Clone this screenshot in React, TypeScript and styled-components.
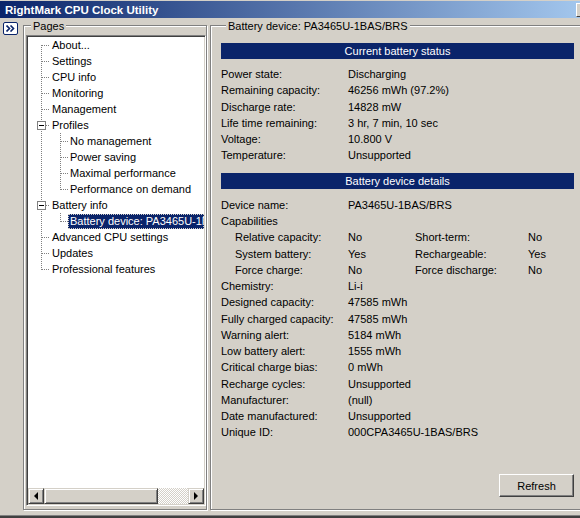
import React from "react";
import styled, {createGlobalStyle, css} from "styled-components";

const GlobalStyle = createGlobalStyle`
    html, body {
        margin: 0;
        padding: 0;
        background: #d4d0c8;
    }
    body {
        font-family: "Liberation Sans", Arial, sans-serif;
        font-size: 11px;
        color: #000;
    }
`;

const Viewport = styled.div`
    width: 580px;
    height: 518px;
    overflow: hidden;
`;

const StyledWindow = styled.div`
    width: 594px;
    height: 518px;
    box-sizing: border-box;
    border-top: 1px solid #d4d0c8;
    background: #d4d0c8;
    display: flex;
    flex-direction: column;
`;

const TitleBar = styled.div`
    height: 17px;
    flex: none;
    display: flex;
    align-items: center;
    justify-content: space-between;
    padding-left: 5px;
    padding-right: 2px;
    background: linear-gradient(to right, #0a246a, #a6caf0);
`;

const Title = styled.span`
    color: #fff;
    font-weight: bold;
    font-size: 11.5px;
    white-space: nowrap;
`;

const CloseButton = styled.span`
    width: 16px;
    height: 14px;
    box-sizing: border-box;
    background: #d4d0c8;
    border: 1px solid;
    border-color: #fff #404040 #404040 #fff;
    display: flex;
    align-items: center;
    justify-content: center;
`;

const Body = styled.div`
    flex: 1;
    display: flex;
    align-items: flex-start;
    padding-bottom: 5px;
`;

const ToggleColumn = styled.div`
    width: 23px;
    flex: none;
    padding: 4px 0 0 3px;
    box-sizing: border-box;
`;

const ToggleButton = styled.div`
    width: 15px;
    height: 13px;
    box-sizing: border-box;
    border: 1px solid #0a246a;
    border-radius: 2px;
    background: #fff;
    display: flex;
    align-items: center;
    justify-content: center;
`;

const GroupBox = styled.div<{ $width: number; $padding: string }>`
    width: ${p => p.$width}px;
    height: 485px;
    margin-top: 7px;
    flex: none;
    box-sizing: border-box;
    border: 1px solid #808080;
    box-shadow: inset 1px 1px 0 #fff, 1px 1px 0 #fff;
    display: flex;
    flex-direction: column;
    padding: ${p => p.$padding};
`;

const Caption = styled.div`
    margin: -6px 0 0 5px;
    padding: 0 2px;
    width: fit-content;
    line-height: 13px;
    background: #d4d0c8;
    white-space: nowrap;
`;

const PagesGroup = styled(GroupBox)`
    margin-left: 0;
`;

const DetailsGroup = styled(GroupBox)`
    margin-left: 3px;
`;

const Tree = styled.div`
    margin-top: 2px;
    flex: 1;
    display: flex;
    flex-direction: column;
    background: #fff;
    border: 1px solid;
    border-color: #808080 #fff #fff #808080;
    box-shadow: inset 1px 1px 0 #404040, inset -1px -1px 0 #d4d0c8;
    padding: 1px;
    overflow: hidden;
`;

const TreeList = styled.div`
    flex: 1;
    overflow: hidden;
    padding-left: 4px;
`;

const TreeRow = styled.div`
    display: flex;
    align-items: center;
    height: 16px;
    min-width: 0;
    white-space: nowrap;
`;

type GuideKind = "first" | "tee" | "last" | "pipe";

const dotsV = "repeating-linear-gradient(to bottom, #808080 0 1px, transparent 1px 2px)";
const dotsH = "repeating-linear-gradient(to right, #808080 0 1px, transparent 1px 2px)";

const Guide = styled.span<{ $kind: GuideKind; $offset: number }>`
    position: relative;
    width: 18px;
    height: 16px;
    flex: none;

    &::before {
        content: "";
        position: absolute;
        left: ${p => p.$offset}px;
        width: 1px;
        background: ${dotsV};
        ${p => p.$kind === "first" && css`top: 8px; bottom: 0;`}
        ${p => (p.$kind === "tee" || p.$kind === "pipe") && css`top: 0; bottom: 0;`}
        ${p => p.$kind === "last" && css`top: 0; height: 9px;`}
    }

    &::after {
        content: "";
        position: absolute;
        left: ${p => p.$offset + 1}px;
        top: 8px;
        width: ${p => 17 - p.$offset}px;
        height: 1px;
        background: ${dotsH};
        display: ${p => (p.$kind === "pipe" ? "none" : "block")};
    }
`;

const Expander = styled.span`
    position: absolute;
    left: 5px;
    top: 4px;
    width: 9px;
    height: 9px;
    box-sizing: border-box;
    border: 1px solid #808080;
    background: #fff;
    z-index: 1;

    &::after {
        content: "";
        position: absolute;
        left: 1px;
        top: 3px;
        width: 5px;
        height: 1px;
        background: #000;
    }
`;

const TreeLabel = styled.span<{ $selected?: boolean }>`
    padding: 0 2px;
    line-height: 15px;
    min-width: 0;
    overflow: hidden;
    text-overflow: clip;
    ${p => p.$selected && css`
        background: #0a246a;
        color: #fff;
        outline: 1px dotted #d4d0c8;
        outline-offset: -1px;
    `}
`;

const ScrollBar = styled.div`
    height: 16px;
    flex: none;
    display: flex;
    background: repeating-conic-gradient(#d4d0c8 0 25%, #fff 0 50%) 0 0 / 2px 2px;
`;

const raised = css`
    box-sizing: border-box;
    background: #d4d0c8;
    border: 1px solid;
    border-color: #d4d0c8 #404040 #404040 #d4d0c8;
    box-shadow: inset 1px 1px 0 #fff, inset -1px -1px 0 #808080;
`;

const ScrollButton = styled.div<{ $dir: "left" | "right" }>`
    ${raised};
    width: 16px;
    height: 16px;
    flex: none;
    display: flex;
    align-items: center;
    justify-content: center;
    margin-left: ${p => (p.$dir === "right" ? "auto" : "0")};

    &::after {
        content: "";
        width: 0;
        height: 0;
        border-top: 4px solid transparent;
        border-bottom: 4px solid transparent;
        ${p => p.$dir === "left"
            ? css`border-right: 4px solid #000;`
            : css`border-left: 4px solid #000;`}
    }
`;

const ScrollThumb = styled.div`
    ${raised};
    width: 114px;
    height: 16px;
`;

const Content = styled.div`
    margin-top: 10px;
    display: flex;
    flex-direction: column;
    flex: 1;
`;

const SectionHeader = styled.div<{ $first?: boolean }>`
    height: 16px;
    margin-top: ${p => (p.$first ? 0 : 9)}px;
    margin-bottom: ${p => (p.$first ? 7 : 8)}px;
    margin-right: 1px;
    background: #0a246a;
    color: #fff;
    text-align: center;
    line-height: 16px;
`;

const DataRow = styled.div`
    display: grid;
    grid-template-columns: 127px 67px 113px 1fr;
    height: 16.27px;
    align-items: center;
    white-space: nowrap;
`;

const Label = styled.span<{ $indent?: boolean; $wide?: boolean }>`
    padding-left: ${p => (p.$indent ? 14 : 0)}px;
    grid-column: ${p => (p.$wide ? "1 / -1" : "auto")};
`;

const Value = styled.span<{ $wide?: boolean }>`
    grid-column: ${p => (p.$wide ? "2 / -1" : "auto")};
`;

const ButtonBar = styled.div`
    margin-top: auto;
    display: flex;
    justify-content: flex-end;
`;

const PushButton = styled.button`
    width: 75px;
    height: 23px;
    margin-right: 1px;
    box-sizing: border-box;
    background: #d4d0c8;
    border: 1px solid;
    border-color: #fff #404040 #404040 #fff;
    box-shadow: inset -1px -1px 0 #808080;
    font-family: "Liberation Sans", Arial, sans-serif;
    font-size: 11px;
    color: #000;
    padding: 0;
`;

const BottomEdge = styled.div`
    height: 3px;
    flex: none;
    border-top: 1px solid #808080;
    background: #404040;
    box-sizing: border-box;
`;

interface TreeItem {
    label: string;
    guides: GuideKind[];
    expander?: boolean;
    selected?: boolean;
}

const treeItems: TreeItem[] = [
    {label: "About...", guides: ["first"]},
    {label: "Settings", guides: ["tee"]},
    {label: "CPU info", guides: ["tee"]},
    {label: "Monitoring", guides: ["tee"]},
    {label: "Management", guides: ["tee"]},
    {label: "Profiles", guides: ["tee"], expander: true},
    {label: "No management", guides: ["pipe", "tee"]},
    {label: "Power saving", guides: ["pipe", "tee"]},
    {label: "Maximal performance", guides: ["pipe", "tee"]},
    {label: "Performance on demand", guides: ["pipe", "last"]},
    {label: "Battery info", guides: ["tee"], expander: true},
    {label: "Battery device: PA3465U-1BAS/BRS", guides: ["pipe", "last"], selected: true},
    {label: "Advanced CPU settings", guides: ["tee"]},
    {label: "Updates", guides: ["tee"]},
    {label: "Professional features", guides: ["last"]},
];

const statusRows: [string, string][] = [
    ["Power state:", "Discharging"],
    ["Remaining capacity:", "46256 mWh (97.2%)"],
    ["Discharge rate:", "14828 mW"],
    ["Life time remaining:", "3 hr, 7 min, 10 sec"],
    ["Voltage:", "10.800 V"],
    ["Temperature:", "Unsupported"],
];

const capabilityRows: [string, string, string, string][] = [
    ["Relative capacity:", "No", "Short-term:", "No"],
    ["System battery:", "Yes", "Rechargeable:", "Yes"],
    ["Force charge:", "No", "Force discharge:", "No"],
];

const detailRows: [string, string][] = [
    ["Chemistry:", "Li-i"],
    ["Designed capacity:", "47585 mWh"],
    ["Fully charged capacity:", "47585 mWh"],
    ["Warning alert:", "5184 mWh"],
    ["Low battery alert:", "1555 mWh"],
    ["Critical charge bias:", "0 mWh"],
    ["Recharge cycles:", "Unsupported"],
    ["Manufacturer:", "(null)"],
    ["Date manufactured:", "Unsupported"],
    ["Unique ID:", "000CPA3465U-1BAS/BRS"],
];

const PagesTree: React.FC = () => (
    <Tree>
        <TreeList>
            {treeItems.map(item => (
                <TreeRow key={item.label}>
                    {item.guides.map((kind, i) => (
                        <Guide key={i} $kind={kind} $offset={i === 0 ? 9 : 10}>
                            {item.expander && i === item.guides.length - 1 && <Expander/>}
                        </Guide>
                    ))}
                    <TreeLabel $selected={item.selected}>{item.label}</TreeLabel>
                </TreeRow>
            ))}
        </TreeList>
        <ScrollBar>
            <ScrollButton $dir="left"/>
            <ScrollThumb/>
            <ScrollButton $dir="right"/>
        </ScrollBar>
    </Tree>
);

const PlainRow: React.FC<{ label: string; value: string }> = ({label, value}) => (
    <DataRow>
        <Label>{label}</Label>
        <Value $wide>{value}</Value>
    </DataRow>
);

const App: React.FC = () => {
    return <Viewport>
        <GlobalStyle/>
        <StyledWindow>
            <TitleBar>
                <Title>RightMark CPU Clock Utility</Title>
                <CloseButton>
                    <svg width="8" height="7" viewBox="0 0 8 7">
                        <path d="M0.5 0.5 L7.5 6.5 M7.5 0.5 L0.5 6.5" stroke="#000" strokeWidth="1.4"/>
                    </svg>
                </CloseButton>
            </TitleBar>
            <Body>
                <ToggleColumn>
                    <ToggleButton>
                        <svg width="9" height="7" viewBox="0 0 9 7">
                            <path d="M0.5 0.5 L3.5 3.5 L0.5 6.5 M4.5 0.5 L7.5 3.5 L4.5 6.5"
                                  fill="none" stroke="#0a246a" strokeWidth="1.6"/>
                        </svg>
                    </ToggleButton>
                </ToggleColumn>
                <PagesGroup $width={184} $padding="0 0 3px 2px">
                    <Caption>Pages</Caption>
                    <PagesTree/>
                </PagesGroup>
                <DetailsGroup $width={376} $padding="0 10px 12px 10px">
                    <Caption>Battery device: PA3465U-1BAS/BRS</Caption>
                    <Content>
                        <SectionHeader $first>Current battery status</SectionHeader>
                        {statusRows.map(([l, v]) => <PlainRow key={l} label={l} value={v}/>)}
                        <SectionHeader>Battery device details</SectionHeader>
                        <PlainRow label="Device name:" value="PA3465U-1BAS/BRS"/>
                        <DataRow><Label $wide>Capabilities</Label></DataRow>
                        {capabilityRows.map(([l1, v1, l2, v2]) => (
                            <DataRow key={l1}>
                                <Label $indent>{l1}</Label>
                                <Value>{v1}</Value>
                                <Label>{l2}</Label>
                                <Value>{v2}</Value>
                            </DataRow>
                        ))}
                        {detailRows.map(([l, v]) => <PlainRow key={l} label={l} value={v}/>)}
                        <ButtonBar>
                            <PushButton>Refresh</PushButton>
                        </ButtonBar>
                    </Content>
                </DetailsGroup>
            </Body>
            <BottomEdge/>
        </StyledWindow>
    </Viewport>;
};

export default App;
